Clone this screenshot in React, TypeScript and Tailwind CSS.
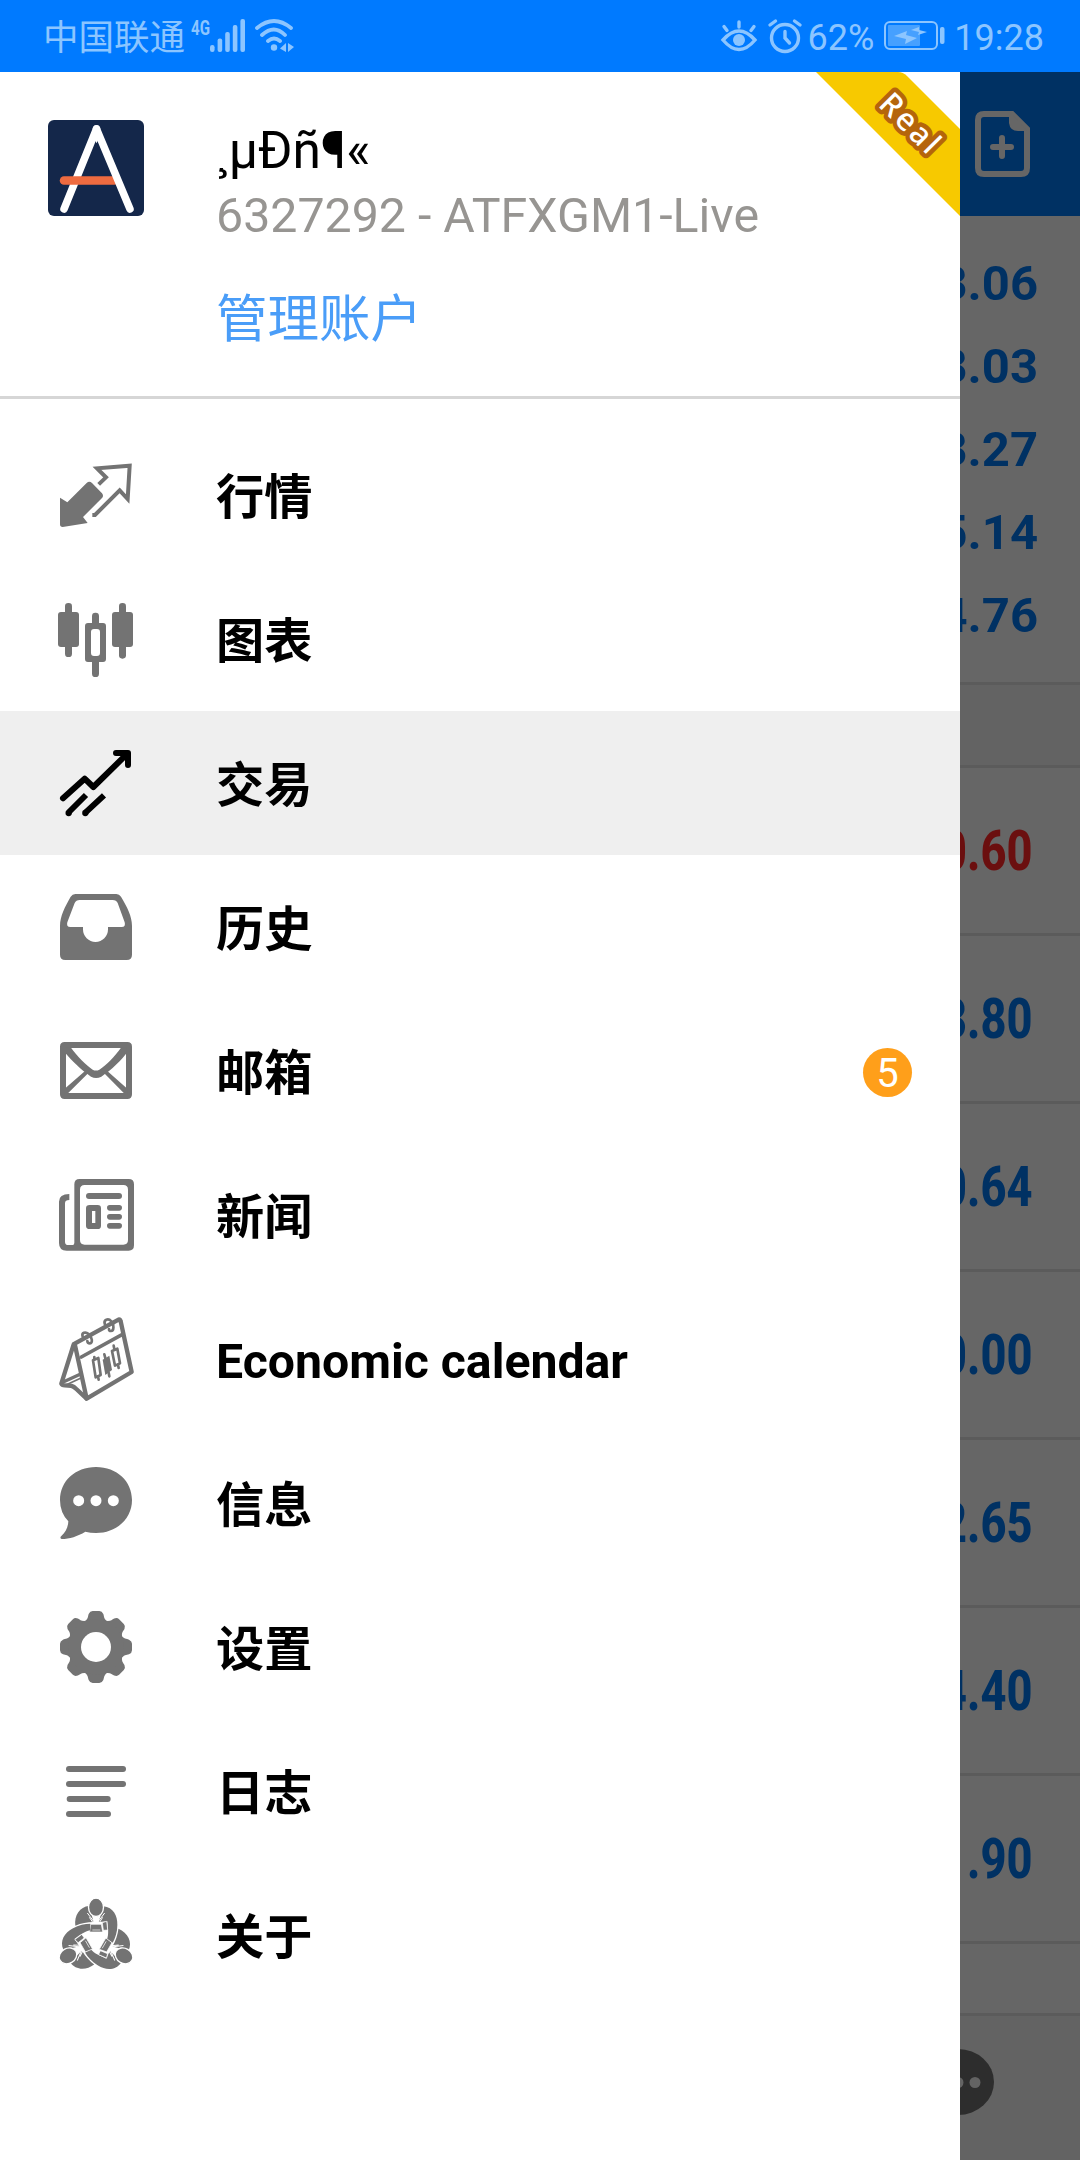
import type { ReactNode } from "react";
import { clsx } from "clsx";

const balances = ["3.06", "3.03", "3.27", "5.14", "4.76"];

const positions = [
  { profit: "0.60", loss: true },
  { profit: "3.80" },
  { profit: "0.64" },
  { profit: "0.00" },
  { profit: "2.65" },
  { profit: "4.40" },
  { profit: "1.90" },
];

function Icon({ viewBox, children }: { viewBox: string; children: ReactNode }) {
  return (
    <svg viewBox={viewBox} className="size-24 shrink-0" fill="currentColor">
      {children}
    </svg>
  );
}

function QuotesIcon() {
  return (
    <Icon viewBox="24 51 288 288">
      <path d="M60 203 L82 217 L140 159 Q148 152 156 159 L186 190 Q192 197 186 204 L129 261 L143 279 L68 291 Q60 291 60 283Z" />
      <path
        d="M176 163 L198 142 L171 115 L269 107 L263 207 L239 181 L165 255 L157 255"
        fill="none"
        stroke="currentColor"
        strokeWidth="12"
      />
    </Icon>
  );
}

function ChartIcon() {
  return (
    <Icon viewBox="24 483 288 288">
      <rect x="75" y="519" width="21" height="162" rx="10" />
      <rect x="54" y="546" width="63" height="105" rx="9" />
      <rect x="237" y="519" width="21" height="167" rx="10" />
      <rect x="216" y="546" width="63" height="105" rx="9" />
      <rect x="156" y="548" width="21" height="40" rx="10" />
      <rect x="156" y="685" width="21" height="56" rx="10" />
      <path
        fillRule="evenodd"
        d="M144 579H189Q198 579 198 588V687Q198 696 189 696H144Q135 696 135 687V588Q135 579 144 579Z M162 597Q153 597 153 606V669Q153 678 162 678H171Q180 678 180 669V606Q180 597 171 597Z"
      />
    </Icon>
  );
}

function TradeIcon() {
  return (
    <Icon viewBox="24 45 288 288">
      <g fill="none" stroke="currentColor" strokeWidth="18" strokeLinejoin="round">
        <path strokeLinecap="round" d="M69 235 L134 176 L160 201 L262 101" />
        <path strokeLinecap="round" d="M228 99 H264 V135" />
        <path d="M138 225 L87 276 M192 226 L137 277" />
      </g>
      <path d="M238 101H264V127Z" />
      <circle cx="86" cy="279" r="9.5" />
      <circle cx="136" cy="279" r="9.5" />
    </Icon>
  );
}

function HistoryIcon() {
  return (
    <Icon viewBox="24 477 288 288">
      <path
        fillRule="evenodd"
        d="M106 522H229Q238 522 243 530C261 560 276 588 276 618V704Q276 720 260 720H76Q60 720 60 704V618C60 588 75 560 92 530Q97 522 106 522Z M119 540Q108 540 104 549L82 607Q78 621 91 621H129V628A37.500 38 0 0 0 204 628V621H245Q258 621 254 607L233 549Q229 540 218 540Z"
      />
    </Icon>
  );
}

function MailIcon() {
  return (
    <Icon viewBox="24 39 288 288">
      <path
        fillRule="evenodd"
        d="M74 96H262Q276 96 276 110V253Q276 267 262 267H74Q60 267 60 253V110Q60 96 74 96Z M78 114V249H258V114Z"
      />
      <path d="M76 112H92C112 140 138 166 158 179Q168 184 178 179C200 166 224 140 244 112H260V129C244 151 216 178 184 200Q168 208 153 200C122 178 94 151 76 129Z" />
      <path d="M74 236L136 182L145 189L84 250H74Z M262 236L201 182L192 189L252 250H262Z" />
    </Icon>
  );
}

function NewsIcon() {
  return (
    <Icon viewBox="24 471 288 288">
      <path
        fillRule="evenodd"
        d="M119 507H266Q282 507 282 523V706Q282 722 266 722H80Q57 722 57 699V575Q57 552 88 552V570Q75 570 75 580V695Q75 705 85 705H98Q103 705 103 698V523Q103 507 119 507Z M134 525Q120 525 120 539V690Q120 704 134 704H250Q264 704 264 690V539Q264 525 250 525Z"
      />
      <rect x="138" y="549" width="108" height="18" rx="9" />
      <path
        fillRule="evenodd"
        d="M149 585H173Q183 585 183 595V647Q183 657 173 657H149Q138 657 138 647V595Q138 585 149 585Z M156 603V639H166V603Z"
      />
      <rect x="201" y="585" width="45" height="17" rx="8.500" />
      <rect x="201" y="612" width="45" height="17" rx="8.500" />
      <rect x="201" y="639" width="45" height="17" rx="8.500" />
    </Icon>
  );
}

function CalendarIcon() {
  return (
    <Icon viewBox="24 63 288 288">
      <g fill="none" stroke="currentColor" strokeWidth="13" strokeLinejoin="round" strokeLinecap="round">
        <path d="M104 161 L237 88 Q241 88 242 94 L275 246 L140 326 Z" />
        <path d="M124 201 L246 134" strokeWidth="11" />
        <path d="M101 163 L64 281 Q66 286 74 286 C92 286 99 287 109 297 L139 325" />
        <path d="M68 277 L122 252" strokeWidth="10" />
        <path d="M76 286 L128 262" strokeWidth="5" />
        <path d="M128 140 C124 128 136 124 146 132 C158 142 158 160 150 160 Q142 160 142 153" strokeWidth="8" />
        <path d="M195 104 C189 88 205 84 214 94 C223 104 222 123 213 123 Q206 123 207 117" strokeWidth="8" />
        <path d="M159 211 L175 204 L182 255 L167 262Z M216 183 L232 176 L240 220 L225 227Z" strokeWidth="8" />
        <path d="M163 201 V208 M174 259 L176 269 M193 193 L197 208 M206 248 L208 259 M221 167 L223 177 M234 224 L236 234" strokeWidth="8" />
      </g>
      <path d="M188 209 L208 197 L216 240 L196 255Z" />
    </Icon>
  );
}

function MessageIcon() {
  return (
    <Icon viewBox="24 495 288 288">
      <path d="M168 531C231 531 276 574 276 630S230 729 168 729Q151 729 136 725C113 739 88 747 65 747Q58 744 64 738C76 727 84 714 85 694Q60 668 60 630C60 574 105 531 168 531Z" />
      <g fill="#fff">
        <circle cx="116" cy="632" r="16.500" />
        <circle cx="168" cy="632" r="16.500" />
        <circle cx="220" cy="632" r="16.500" />
      </g>
    </Icon>
  );
}

function SettingsIcon() {
  return (
    <Icon viewBox="24 27 288 288">
      <g transform="translate(168 171)">
        {[0, 45, 90, 135, 180, 225, 270, 315].map((angle) => (
          <path
            key={angle}
            transform={`rotate(${angle})`}
            d="M-38 -74C-22 -84 -25 -91 -22 -99Q-18 -108 -10 -108H10Q18 -108 22 -99C25 -91 22 -84 38 -74Z"
          />
        ))}
        <circle r="83" />
        <circle r="45" fill="#fff" />
      </g>
    </Icon>
  );
}

function JournalIcon() {
  return (
    <Icon viewBox="24 459 288 288">
      <rect x="78" y="528" width="180" height="18" rx="9" />
      <rect x="78" y="573" width="180" height="18" rx="9" />
      <rect x="80" y="618" width="132" height="18" rx="9" />
      <rect x="78" y="663" width="135" height="18" rx="9" />
    </Icon>
  );
}

// Three people in a circle, the same figure turned by a third each time
function AboutIcon() {
  return (
    <Icon viewBox="-6 21 288 288">
      {[0, 120, 240].map((angle) => (
        <g key={angle} transform={`rotate(${angle} 138 179)`}>
          <path d="M76 137C72 106 90 80 117 78L131 126Q102 126 76 137Z" />
          <path d="M160 79C190 82 203 108 202 135C202 157 196 174 188 188L171 178C177 162 174 144 172 124L146 126Z" />
          <path d="M112 99L134 128M164 99L142 128M118 112L131 131M158 112L146 131" fill="none" stroke="#fff" strokeWidth="3" />
          <path d="M122 133H154L158 156H119Z" stroke="#fff" strokeWidth="2" />
          <path d="M127 150H151" stroke="#fff" strokeWidth="2" />
          <path d="M157 128L170 124L173 150L160 151Z" stroke="#fff" strokeWidth="2" />
          <ellipse cx="138" cy="82" rx="22.500" ry="27.500" stroke="#fff" strokeWidth="4" />
        </g>
      ))}
    </Icon>
  );
}

const menu = [
  { label: "行情", icon: <QuotesIcon /> },
  { label: "图表", icon: <ChartIcon /> },
  { label: "交易", icon: <TradeIcon />, active: true },
  { label: "历史", icon: <HistoryIcon /> },
  { label: "邮箱", icon: <MailIcon />, badge: 5 },
  { label: "新闻", icon: <NewsIcon /> },
  { label: "Economic calendar", icon: <CalendarIcon /> },
  { label: "信息", icon: <MessageIcon /> },
  { label: "设置", icon: <SettingsIcon /> },
  { label: "日志", icon: <JournalIcon /> },
  { label: "关于", icon: <AboutIcon /> },
];

function StatusBar() {
  return (
    <header className="flex h-[72px] items-center justify-between bg-[#007aff] pr-[36px] pl-[43px] text-[#8cc5ff]">
      <div className="flex items-center">
        <span className="pt-1 text-[35.5px] leading-[72px]">中国联通</span>
        <span className="ml-[6px] h-[36px] w-[19px] origin-left scale-x-[.72] text-[21px] leading-[20px] font-bold">4G</span>
        <svg viewBox="0 0 36 34" className="h-[34px] w-[36px]" fill="currentColor">
          <rect x="0" y="26" width="4.600" height="7" rx="2.200" />
          <rect x="7.600" y="19.500" width="4.600" height="13.500" rx="2" />
          <rect x="15.200" y="13" width="4.600" height="20" rx="2" />
          <rect x="22.800" y="6" width="4.600" height="27" rx="2" />
          <rect x="30.400" y="0" width="4.600" height="33" rx="2" />
        </svg>
        <svg viewBox="0 0 42 34" className="ml-[8px] h-[34px] w-[42px]" fill="none" stroke="currentColor" strokeWidth="3.800" strokeLinecap="round">
          <path d="M3 9Q20 -5 37 9M8 16Q20 5 31 16M14 22Q20 17 26 22" />
          <circle cx="20" cy="28.500" r="3.200" fill="currentColor" stroke="none" />
          <path d="M32 24V33L26 29.500ZM34 24V33L40 28Z" fill="currentColor" stroke="none" />
        </svg>
      </div>
      <div className="flex items-center">
        <svg viewBox="0 0 38 34" className="h-[34px] w-[38px]" fill="none" stroke="currentColor" strokeWidth="3.400" strokeLinecap="round">
          <path d="M3 21Q11 12 19 12T35 21Q27 30.500 19 30.500T3 21ZM19 3V8M4 7.500L7 11.500M34 7.500L31 11.500" />
          <circle cx="19" cy="21" r="6" fill="currentColor" stroke="none" />
        </svg>
        <svg viewBox="0 0 36 36" className="ml-[9px] h-[36px] w-[36px]" fill="none" stroke="currentColor" strokeWidth="3.400" strokeLinecap="round">
          <circle cx="18" cy="20" r="13.500" />
          <path d="M18 13.500V20L22.500 25M3 7L8.500 3M33 7L27.500 3" />
        </svg>
        <span className="ml-[5px] pt-[3px] text-[36px] leading-[76px]">62%</span>
        <svg viewBox="0 0 62 30" className="ml-[10px] h-[30px] w-[62px]" fill="currentColor">
          <rect x="1" y="1" width="52" height="27" rx="5" fill="none" stroke="currentColor" strokeWidth="2" />
          <rect x="4" y="4" width="32" height="21" rx="1" opacity=".5" />
          <path d="M10 15L23 10L22 14L33 17L21 23L22 18ZM27 9L35 6L35 9L43 11L34 14L35 11Z" />
          <rect x="56" y="6" width="4.500" height="17" rx="2" />
        </svg>
        <span className="ml-[8px] pt-[3px] text-[36px] leading-[76px]">19:28</span>
      </div>
    </header>
  );
}

function TradePage() {
  return (
    <main className="flex h-[2088px] flex-col bg-[#666] text-[#003163]">
      <div className="flex h-36 shrink-0 items-center justify-end bg-[#003163] pr-[50px] text-[#666]">
        <svg viewBox="0 0 55 66" className="h-[66px] w-[55px]" fill="none" stroke="currentColor" strokeWidth="6">
          <path d="M9 3H37L52 18V57Q52 63 46 63H9Q3 63 3 57V9Q3 3 9 3Z" />
          <path d="M34 3V12Q35 20 43 20H52L37 3Z" fill="currentColor" stroke="none" />
          <path d="M27 27V45M18 36H36" strokeLinecap="round" />
        </svg>
      </div>
      <ul className="h-[466px] shrink-0 pt-[26px] pr-[42px] text-right text-[49px] leading-[83px] font-bold">
        {balances.map((value) => (
          <li key={value}>{value}</li>
        ))}
      </ul>
      <div className="h-[83px] shrink-0 border-t-3 border-[#5b5b5b] bg-[#636363]" />
      <ul className="shrink-0 text-right text-[55px] font-extrabold">
        {positions.map((p) => (
          <li
            key={p.profit}
            className={clsx(
              "flex h-[168px] items-center justify-end border-t-3 border-[#5b5b5b] pt-0.5 pr-12",
              p.loss && "text-[#6b0f0f]",
            )}
          >
            <span className="origin-right scale-x-[.82]">{p.profit}</span>
          </li>
        ))}
      </ul>
      <div className="h-[72px] shrink-0 border-t-3 border-[#5b5b5b]" />
      <nav className="flex grow justify-end border-t-3 border-[#5b5b5b] bg-[#636363] pt-[33px] pr-[86px]">
        <svg viewBox="0 0 72 66" className="h-[66px] w-[72px]">
          <ellipse cx="36" cy="33" rx="36" ry="33" fill="#2d2d2d" />
          <g fill="#636363">
            <circle cx="18.500" cy="33.500" r="5.500" />
            <circle cx="36" cy="33.500" r="5.500" />
            <circle cx="53" cy="33.500" r="5.500" />
          </g>
        </svg>
      </nav>
    </main>
  );
}

function Account() {
  return (
    <section className="relative flex h-[327px] border-b-3 border-[#d6d6d6] pt-12 pl-12">
      <svg viewBox="0 0 96 96" className="size-24 shrink-0" fill="none" strokeLinecap="round">
        <rect width="96" height="96" rx="6" fill="#14274a" />
        <path d="M16 89L48.500 9" stroke="#fff" strokeWidth="7.500" />
        <path d="M16 60.500H66" stroke="#ee6b40" strokeWidth="8.500" />
        <path d="M48.500 9L82 89" stroke="#fff" strokeWidth="7.500" />
        <path d="M45 13L48.500 8L52 13L48.500 20Z" fill="#fff" stroke="#fff" strokeWidth="3" />
      </svg>
      <div className="ml-[72px] flex flex-col">
        <span className="mt-[-2px] h-[66px] text-[51.5px] leading-[65px] text-black">¸µÐñ¶«</span>
        <span className="h-[66px] text-[48.3px] leading-[63px] text-[#979592]">6327292 - ATFXGM1-Live</span>
        <a className="mt-[37px] text-[51.5px] leading-[66px] text-[#4a9df8]">管理账户</a>
      </div>
      <svg viewBox="0 0 144 144" className="absolute top-0 right-0 size-36">
        <path d="M0 0H82Q87 0 91 4L144 57V144Z" fill="#f7c900" />
        <text
          transform="translate(93 51) rotate(45)"
          x="2"
          y="10"
          textAnchor="middle"
          fontSize="31"
          letterSpacing="2.500"
          fill="#fff"
          stroke="#b5650b"
          strokeWidth="9"
          strokeLinejoin="round"
          paintOrder="stroke"
          className="font-['Noto_Sans',sans-serif] font-medium"
        >
          Real
        </text>
      </svg>
    </section>
  );
}

export default function App() {
  return (
    <div className="relative h-[2160px] w-[1080px] overflow-hidden font-['Roboto','Noto_Sans_CJK_SC',sans-serif]">
      <StatusBar />
      <TradePage />
      <aside className="absolute top-[72px] left-0 h-[2088px] w-[960px] bg-white">
        <Account />
        <ul className="pt-6">
          {menu.map((item) => (
            <li
              key={item.label}
              className={clsx(
                "flex h-36 items-center pr-12 pl-12",
                item.active ? "bg-[#efefef] text-black" : "text-[#737373]",
              )}
            >
              {item.icon}
              <span className="ml-[72px] grow pt-[5px] text-[48.2px] leading-[60px] font-bold text-black">{item.label}</span>
              {item.badge && (
                <span className="mt-0.5 flex size-[49px] items-center justify-center rounded-full bg-[#ff9f1a] pt-1 text-[40px] leading-none text-white">
                  {item.badge}
                </span>
              )}
            </li>
          ))}
        </ul>
      </aside>
    </div>
  );
}
